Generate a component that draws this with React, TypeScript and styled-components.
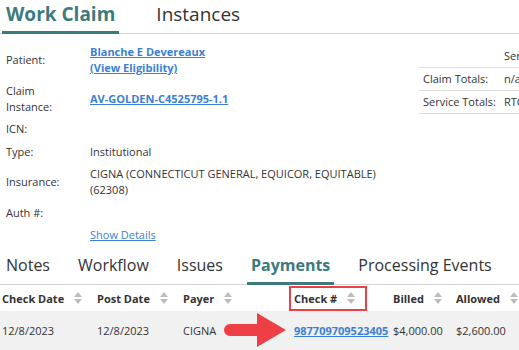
import styled, { createGlobalStyle } from 'styled-components'

const Global = createGlobalStyle`
  body {
    margin: 0;
    background: #fff;
    overflow: hidden;
    font-family: 'Open Sans', 'Liberation Sans', sans-serif;
    color: #333;
  }
`

const teal = '#3d7a7d'
const blue = '#3b7fd4'
const red = '#ef3f46'

const Page = styled.div`
  width: 640px;
`

const TopTabs = styled.div`
  display: flex;
  gap: 33px;
  height: 34px;
  padding-left: 2px;
  border-bottom: 1px solid #d4d4d4;
  box-sizing: border-box;
`

const TopTab = styled.div<{ $active?: boolean }>`
  font-size: 19px;
  line-height: 28px;
  padding: 0 4px;
  font-weight: ${(p) => (p.$active ? 700 : 400)};
  color: ${(p) => (p.$active ? teal : '#333')};
  border-bottom: 3px solid ${(p) => (p.$active ? teal : 'transparent')};
  height: 34px;
  box-sizing: border-box;
`

const Info = styled.div`
  display: flex;
  padding-top: 10px;
`

const Fields = styled.div`
  width: 419px;
  padding-left: 6px;
  box-sizing: border-box;
  display: flex;
  flex-direction: column;
  gap: 6.5px;
`

const Field = styled.div`
  display: flex;
  align-items: center;
  font-size: 11px;
  line-height: 16px;
`

const Label = styled.div`
  width: 62px;
  margin-right: 22px;
  flex-shrink: 0;
`

const Value = styled.div`
  width: 318px;
`

const Link = styled.a<{ $bold?: boolean }>`
  color: ${blue};
  font-weight: ${(p) => (p.$bold ? 700 : 400)};
  text-decoration: underline;
  cursor: pointer;
`

const Totals = styled.table`
  border-collapse: collapse;
  font-size: 11px;
  width: 200px;
`

const TotalRow = styled.tr`
  height: 23px;
  border-bottom: 1px solid #ddd;
  td {
    padding: 0 4px;
    white-space: nowrap;
  }
  td:first-child {
    width: 73px;
  }
`

const SubTabs = styled.div`
  display: flex;
  gap: 20px;
  margin-top: 11px;
  padding-left: 2px;
  border-bottom: 1px solid #d4d4d4;
`

const SubTab = styled.div<{ $active?: boolean }>`
  font-size: 16px;
  line-height: 22px;
  padding: 0 4px 6px;
  font-weight: ${(p) => (p.$active ? 700 : 400)};
  color: ${(p) => (p.$active ? teal : '#333')};
  border-bottom: 3px solid ${(p) => (p.$active ? teal : 'transparent')};
  margin-bottom: -1px;
`

const Grid = styled.table`
  border-collapse: collapse;
  font-size: 11px;
  table-layout: fixed;
  width: 560px;
`

const Th = styled.th`
  text-align: left;
  font-weight: 700;
  height: 26px;
  padding: 0 0 0 2px;
  white-space: nowrap;
`

const HeadInner = styled.span<{ $marked?: boolean }>`
  display: inline-flex;
  align-items: center;
  gap: 10px;
  outline: ${(p) => (p.$marked ? `2px solid ${red}` : 'none')};
  outline-offset: 3px;
  ${(p) => (p.$marked ? 'padding-right: 7px;' : '')}
`

const DataRow = styled.tr`
  background: #f1f1f1;
  height: 39px;
  td {
    padding: 0 0 0 2px;
    white-space: nowrap;
  }
`

const ArrowCell = styled.td`
  position: relative;
`

const Arrow = styled.svg`
  position: absolute;
  left: 43px;
  top: 2px;
`

const SortIcon = () => (
  <svg width="8" height="12" viewBox="0 0 8 12">
    <path d="M4 0 L8 5 L0 5 Z" fill="#bdbdbd" />
    <path d="M0 7 L8 7 L4 12 Z" fill="#bdbdbd" />
  </svg>
)

const Head = ({ label, marked }: { label: string; marked?: boolean }) => (
  <Th>
    <HeadInner $marked={marked}>
      {label}
      <SortIcon />
    </HeadInner>
  </Th>
)

const App = () => (
  <Page>
    <Global />
    <TopTabs>
      <TopTab $active>Work Claim</TopTab>
      <TopTab>Instances</TopTab>
    </TopTabs>
    <Info>
      <Fields>
        <Field>
          <Label>Patient:</Label>
          <Value>
            <Link $bold>Blanche E Devereaux</Link>
            <br />
            <Link $bold>(View Eligibility)</Link>
          </Value>
        </Field>
        <Field>
          <Label>Claim Instance:</Label>
          <Value>
            <Link $bold>AV-GOLDEN-C4525795-1.1</Link>
          </Value>
        </Field>
        <Field>
          <Label>ICN:</Label>
          <Value />
        </Field>
        <Field>
          <Label>Type:</Label>
          <Value>Institutional</Value>
        </Field>
        <Field>
          <Label>Insurance:</Label>
          <Value>CIGNA (CONNECTICUT GENERAL, EQUICOR, EQUITABLE) (62308)</Value>
        </Field>
        <Field>
          <Label>Auth #:</Label>
          <Value />
        </Field>
        <Field>
          <Label />
          <Value>
            <Link>Show Details</Link>
          </Value>
        </Field>
      </Fields>
      <div>
        <Totals>
          <tbody>
            <TotalRow>
              <td></td>
              <td>Service Totals</td>
            </TotalRow>
            <TotalRow>
              <td>Claim Totals:</td>
              <td>n/a</td>
            </TotalRow>
            <TotalRow>
              <td>Service Totals:</td>
              <td>RTC</td>
            </TotalRow>
          </tbody>
        </Totals>
      </div>
    </Info>
    <SubTabs>
      <SubTab>Notes</SubTab>
      <SubTab>Workflow</SubTab>
      <SubTab>Issues</SubTab>
      <SubTab $active>Payments</SubTab>
      <SubTab>Processing Events</SubTab>
    </SubTabs>
    <Grid>
      <colgroup>
        <col style={{ width: 95 }} />
        <col style={{ width: 86 }} />
        <col style={{ width: 111 }} />
        <col style={{ width: 99 }} />
        <col style={{ width: 63 }} />
        <col style={{ width: 106 }} />
      </colgroup>
      <thead>
        <tr>
          <Head label="Check Date" />
          <Head label="Post Date" />
          <Head label="Payer" />
          <Head label="Check #" marked />
          <Head label="Billed" />
          <Head label="Allowed" />
        </tr>
      </thead>
      <tbody>
        <DataRow>
          <td>12/8/2023</td>
          <td>12/8/2023</td>
          <ArrowCell>
            CIGNA
            <Arrow width="62" height="34" viewBox="0 0 62 34">
              <path d="M6 11 L33 11 L33 0 L62 17 L33 34 L33 23 L6 23 A6 6 0 0 1 6 11 Z" fill={red} />
            </Arrow>
          </ArrowCell>
          <td>
            <Link $bold>987709709523405</Link>
          </td>
          <td>$4,000.00</td>
          <td>$2,600.00</td>
        </DataRow>
      </tbody>
    </Grid>
  </Page>
)

export default App
